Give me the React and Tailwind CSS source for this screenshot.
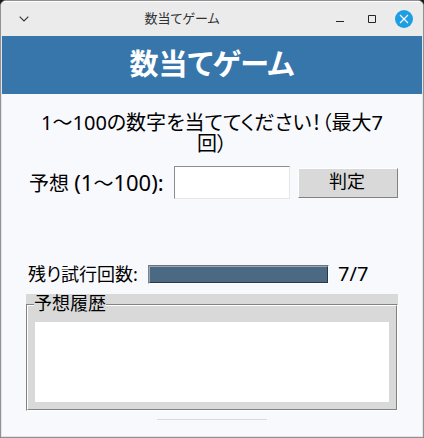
import React from "react";

function TitleBar() {
  return (
    <header className="flex h-[34px] items-center bg-[#ebebec] pr-[10px] pl-[11px] font-['Noto_Sans_CJK_JP',sans-serif]">
      <button aria-label="メニュー" className="flex h-5 w-6 items-center justify-center">
        <svg width="10" height="6" viewBox="0 0 10 6" fill="none" stroke="#333" strokeWidth="1.1">
          <path d="M.7.7 5 5 9.3.7" />
        </svg>
      </button>
      <span className="flex-1 pb-0.5 pl-1 text-center text-[13px] leading-5 text-[#303234]">数当てゲーム</span>
      <button aria-label="最小化" className="flex size-8 items-center justify-center">
        <svg width="8" height="8" viewBox="0 0 8 8" fill="#232629">
          <path d="M0 6h8v1H0z" />
        </svg>
      </button>
      <button aria-label="最大化" className="flex size-8 items-center justify-center">
        <svg width="8" height="8" viewBox="0 0 8 8" fill="none" stroke="#232629">
          <path d="M.5.5h7v7h-7z" />
        </svg>
      </button>
      <button aria-label="閉じる" className="flex h-8 w-[25px] items-center justify-end">
        <svg width="18" height="18" viewBox="0 0 18 18" fill="none">
          <circle cx="9" cy="9" r="9" fill="#1d9de2" />
          <path d="m5 5 8 8m0-8-8 8" stroke="#fff" strokeWidth="1.1" />
        </svg>
      </button>
    </header>
  );
}

export default function App() {
  return (
    <div className="bg-[#1a1a1a] font-['Noto_Sans','Noto_Sans_CJK_JP',sans-serif] text-black [font-feature-settings:'palt']">
      <div className="flex min-h-screen flex-col overflow-hidden rounded-t-md border border-[#919193] bg-[#f8f9fd]">
        <div className="border-t border-white">
          <TitleBar />
        </div>
        <main className="flex grow flex-col border-x border-b border-[#e4e4e6]">
          <h1 className="flex h-[58px] items-center justify-center bg-[#3776ab] pb-0.5 text-[29px] font-bold text-white">
            数当てゲーム
          </h1>
          <div className="flex flex-col px-6 pt-[18px]">
            <p className="px-3 text-center text-[20px] leading-[21px]">
              1〜100の数字を当ててください！（最大7
              <br />
              回）
            </p>
            <form className="mt-3 flex items-center" onSubmit={(e) => e.preventDefault()}>
              <label htmlFor="guess" className="w-[148px] pl-[3px] text-[20px] leading-7 whitespace-nowrap">
                予想 <span className="text-[22px]">(1</span>〜<span className="text-[22px]">100):</span>
              </label>
              <input
                id="guess"
                className="h-[33px] w-[116px] shrink-0 border border-t-[#8c8c8e] border-r-[#e6e6e8] border-b-[#e6e6e8] border-l-[#8c8c8e] bg-white px-1 text-[20px] outline-none"
              />
              <button className="ml-2 h-[30px] grow border border-t-white border-r-[#828282] border-b-[#828282] border-l-white bg-[#d9d9d9] pr-0.5 pb-1 text-[18px] leading-6">
                判定
              </button>
            </form>
            <div className="mt-[63px] flex h-6 items-center text-[18px] leading-6">
              <label htmlFor="remaining" className="w-[122px] pl-[2px] whitespace-nowrap">
                残り試行回数:
              </label>
              <div
                id="remaining"
                role="progressbar"
                aria-valuenow={7}
                aria-valuemax={7}
                className="h-[19px] w-[181px] border border-t-[#6f7274] border-r-white border-b-white border-l-[#828282]"
              >
                <div className="h-full w-full border border-t-[#93a9bd] border-r-[#27394a] border-b-[#27394a] border-l-[#93a9bd] bg-[#4b6983]" />
              </div>
              <span className="ml-[9px] text-[20px]">7/7</span>
            </div>
            <section className="mt-2 bg-[#d9d9d9] pt-[10px]">
              <fieldset className="relative border border-t-[#828282] border-r-white border-b-white border-l-[#828282]">
                <div className="border border-t-white border-r-[#828282] border-b-[#828282] border-l-white px-[7px] pt-4 pb-[7px]">
                  <div className="h-20 bg-white" />
                </div>
                <legend className="absolute -top-[11px] left-[7px] bg-[#d9d9d9] text-[18px] leading-[18px]">予想履歴</legend>
              </fieldset>
            </section>
            <hr className="mx-auto mt-2 w-[110px] border-[#d9d9dc]" />
          </div>
        </main>
      </div>
    </div>
  );
}
